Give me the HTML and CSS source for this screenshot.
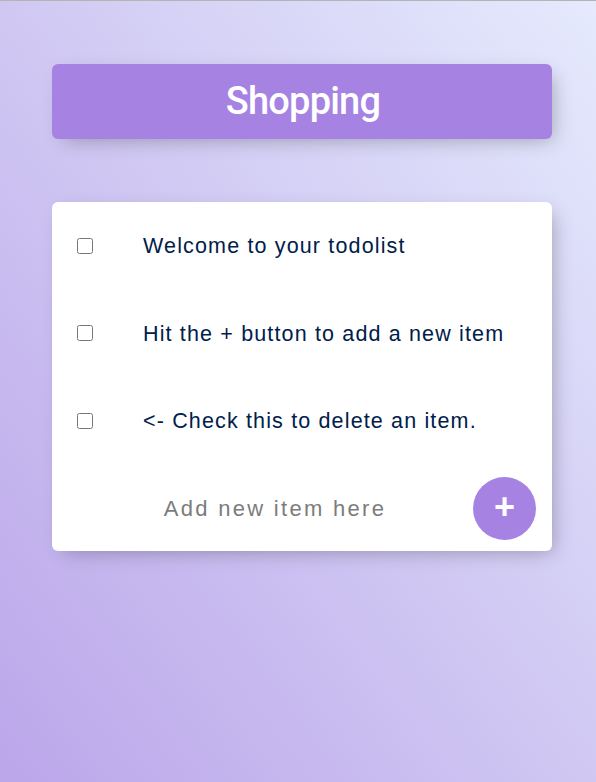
FILE: index.html
```html
<!DOCTYPE html>
<html lang="en">
<head>
<meta charset="utf-8">
<title>To Do List</title>
<link rel="stylesheet" href="styles.css">
</head>
<body>
  <div class="box heading">
    <h1>Shopping</h1>
  </div>
  <div class="box list">
    <div class="item">
      <input type="checkbox" class="check">
      <p class="text">Welcome to your todolist</p>
    </div>
    <div class="item">
      <input type="checkbox" class="check">
      <p class="text">Hit the + button to add a new item</p>
    </div>
    <div class="item">
      <input type="checkbox" class="check">
      <p class="text">&lt;- Check this to delete an item.</p>
    </div>
    <form class="item add-form">
      <input type="text" class="new-item" placeholder="Add new item here" autocomplete="off">
      <button type="button" class="add-btn">+</button>
    </form>
  </div>
</body>
</html>
```
FILE: styles.css
```css
html {
  height: 100%;
}
body {
  margin: 0;
  min-height: 782px;
  box-sizing: border-box;
  border-top: 1px solid #b4b4b4;
  padding: 63px 0 0 8px;
  background: linear-gradient(to top right, #bba6ea 0%, #d0c8f3 50%, #e5eafd 100%);
  font-family: "Liberation Sans", Arial, sans-serif;
}
.box {
  width: 500px;
  margin: 0 auto 63px;
  background: #ffffff;
  border-radius: 6px;
  box-shadow: 6px 6px 19px -6px rgba(0, 0, 0, 0.3);
}
.heading {
  background: #a683e3;
  height: 75px;
  display: flex;
  align-items: center;
  justify-content: center;
}
.heading h1 {
  margin: 0;
  color: #ffffff;
  font-family: Roboto, "Liberation Sans", Arial, sans-serif;
  font-weight: 500;
  font-size: 38px;
  letter-spacing: -0.8px;
  line-height: 1;
  padding: 0 0 2px 2px;
}
.list {
  overflow: hidden;
}
.item {
  height: 87.5px;
  display: flex;
  align-items: center;
}
.check {
  width: 16px;
  height: 16px;
  margin: 0 25px;
  flex: none;
}
.text {
  margin: 0;
  padding: 2px 25px 0;
  font-size: 21.5px;
  letter-spacing: 1.15px;
  color: #00204a;
}
.add-form {
  height: 86.5px;
  margin: 0 0 0 25px;
  gap: 5px;
}
.new-item {
  width: 391px;
  height: 75px;
  border: none;
  background: transparent;
  text-align: center;
  font-family: "Liberation Sans", Arial, sans-serif;
  font-size: 22px;
  letter-spacing: 2.3px;
  color: #00204a;
  padding: 2px 0 0 5px;
  box-sizing: border-box;
  outline: none;
}
.new-item::placeholder {
  color: #7c7c7c;
}
.add-btn {
  width: 63px;
  height: 63px;
  flex: none;
  border: none;
  border-radius: 50%;
  background: #a683e3;
  color: #ffffff;
  font-family: "Liberation Sans", Arial, sans-serif;
  font-weight: bold;
  font-size: 36px;
  line-height: 1;
  padding: 0 0 4px;
  margin-top: 2px;
}
```
